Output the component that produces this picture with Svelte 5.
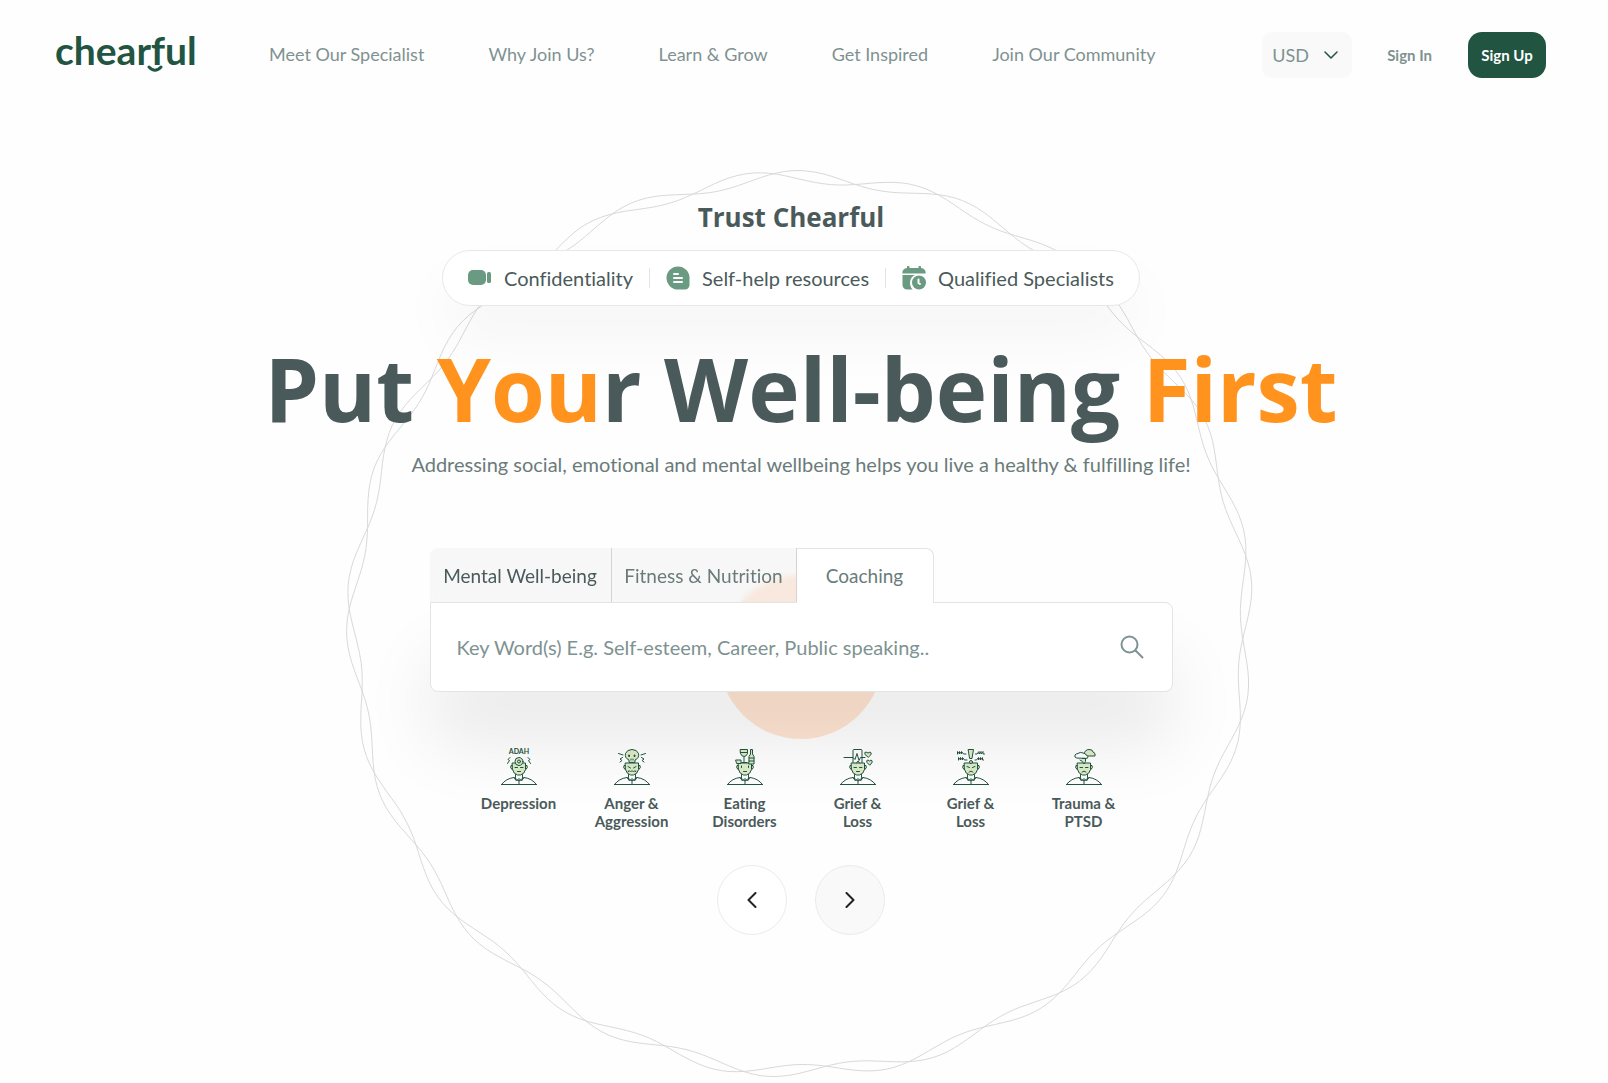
<!--
  Landing page - top navigation, hero with category search and topic carousel
-->

<script lang="ts">
  const navLinks = [
    'Meet Our Specialist',
    'Why Join Us?',
    'Learn & Grow',
    'Get Inspired',
    'Join Our Community'
  ];

  const perks = [
    { icon: 'video', label: 'Confidentiality' },
    { icon: 'article', label: 'Self-help resources' },
    { icon: 'calendar', label: 'Qualified Specialists' }
  ];

  const tabs = ['Mental Well-being', 'Fitness & Nutrition', 'Coaching'];

  const topics = [
    { icon: 'adah', label: 'Depression' },
    { icon: 'skull', label: 'Anger & Aggression' },
    { icon: 'drinks', label: 'Eating Disorders' },
    { icon: 'pulse', label: 'Grief & Loss' },
    { icon: 'alert', label: 'Grief & Loss' },
    { icon: 'cloud', label: 'Trauma & PTSD' }
  ];

  let activeTab = $state('Coaching');
  let currency = $state('USD');
  let query = $state('');

  // Closed wave running round a circle: 17 periods, shifted by the phase in degrees
  function wavePath(phase: number): string {
    const points: string[] = [];
    for (let deg = 0; deg < 360; deg += 1) {
      const wave = ((17 * (deg - 12.5) + phase) * Math.PI) / 180;
      const r = 447 + 6.5 * Math.cos(wave);
      const angle = (deg * Math.PI) / 180;
      points.push(`${(455 + r * Math.cos(angle)).toFixed(1)} ${(455 + r * Math.sin(angle)).toFixed(1)}`);
    }
    return `M${points.join('L')}Z`;
  }

  const waves = [wavePath(-52), wavePath(52)];
</script>

<header class="topbar">
  <a class="logo" href="#home" aria-label="chearful home">
    <span>chearful</span>
    <svg class="smile" viewBox="0 0 16 8" aria-hidden="true">
      <path d="M2 2Q8 8.5 14 2" />
    </svg>
  </a>

  <nav class="nav">
    {#each navLinks as link (link)}
      <a href="#{link}">{link}</a>
    {/each}
  </nav>

  <div class="account">
    <div class="currency">
      <select bind:value={currency} aria-label="Currency">
        <option>USD</option>
        <option>EUR</option>
        <option>GBP</option>
      </select>
      <svg viewBox="0 0 14 8" aria-hidden="true"><path d="M1 1l6 6 6-6" /></svg>
    </div>
    <a class="sign-in" href="#sign-in">Sign In</a>
    <button class="sign-up">Sign Up</button>
  </div>
</header>

<main class="hero">
  <svg class="waves" viewBox="0 0 910 910" aria-hidden="true">
    {#each waves as d (d)}
      <path {d} />
    {/each}
  </svg>

  <section class="trust">
    <h2>Trust Chearful</h2>
    <ul class="perks">
      {#each perks as perk (perk.icon)}
        <li>
          <svg viewBox="0 0 24 24" aria-hidden="true">
            {#if perk.icon === 'video'}
              <rect x="0" y="4" width="18" height="15" rx="5" />
              <rect x="19" y="6" width="4" height="11" rx="1.5" />
            {:else if perk.icon === 'article'}
              <path d="M12 0.5a11.5 11.5 0 0 1 11.5 11.5v7a4.5 4.5 0 0 1-4.5 4.5h-7a11.5 11.5 0 0 1 0-23z" />
              <path class="lines" d="M8 8h4M8 12h8M8 16h8" />
            {:else}
              <path d="M5 2V1a1 1 0 0 1 2.5 0v1h9V1a1 1 0 0 1 2.5 0v1a4.5 4.5 0 0 1 4.5 5.5H.5A4.5 4.5 0 0 1 5 2z" />
              <path d="M.5 9H13c-5 2-7 9-2.5 14.5H5A4.5 4.5 0 0 1 .5 19z" />
              <circle cx="17" cy="16.5" r="7" />
              <path class="lines" d="M16.5 13.5v3.5l1.5 1" />
            {/if}
          </svg>
          <span>{perk.label}</span>
        </li>
      {/each}
    </ul>
  </section>

  <h1>Put <em>You</em>r Well-being <em>First</em></h1>
  <p class="lead">Addressing social, emotional and mental wellbeing helps you live a healthy &amp; fulfilling life!</p>

  <section class="finder">
    <div class="orb"></div>
    <div class="tabs" role="tablist">
      {#each tabs as tab (tab)}
        <button
          role="tab"
          class:active={tab === activeTab}
          aria-selected={tab === activeTab}
          onclick={() => (activeTab = tab)}
        >
          {tab}
        </button>
      {/each}
    </div>
    <form class="search" onsubmit={(e) => e.preventDefault()}>
      <input
        type="text"
        bind:value={query}
        aria-label="Key words"
        placeholder="Key Word(s) E.g. Self-esteem, Career, Public speaking.."
      />
      <button aria-label="Search">
        <svg viewBox="0 0 24 24" aria-hidden="true">
          <circle cx="9.5" cy="9.5" r="8" />
          <path d="M15.5 15.5l7 7" />
        </svg>
      </button>
    </form>
  </section>

  <ul class="topics">
    {#each topics as topic (topic.icon)}
      <li>
        <a href="#{topic.icon}">
          <svg viewBox="0 0 36 36" aria-hidden="true">
            <!-- shoulders, collar, head -->
            <path d="M.5 35.5h35M.5 35.5Q5 29.5 13 28.5L18 32l5-3.5q8 1 12.5 7M14.5 25v3.5M21.5 25v3.5M13 28.5l2.5 3.5 2.5-2.5 2.5 2.5 2.5-3.5M18 31v4" />
            <path class="skin" d="M11.5 16.5H10q-1.5 2 1.5 4.5M24.5 16.5H26q1.5 2-1.5 4.5" />
            <path class="skin" d="M11.5 14h13v6.5q-1 4.5-5 5.5h-3q-4-1-5-5.5z" />
            {#if topic.icon === 'adah'}
              <text x="18" y="5">ADAH</text>
              <path d="M9 8.5l-2 2 1.5 1-2 3M27 8.5l2 2-1.5 1 2 3" />
              <circle class="skin" cx="18" cy="12.5" r="4" />
              <circle cx="18" cy="12.5" r="1.5" />
              <path d="M14 18.5h2.5M19.5 18.5H22M16.5 22.5h3" />
            {:else if topic.icon === 'skull'}
              <path class="skin" d="M15 13v-2q-4.5-2-3.5-6.5Q13 .5 18 .5t6.5 4Q25.5 9 21 11v2z" />
              <path class="dark" d="M15 6h.5v1.5H15zM20.5 6h.5v1.5h-.5z" />
              <path d="M17 10v1M19 10v1M9 6L4.5 4.5M8.5 8.5L6 10l2 1.5L6 13M27 6l4.5-1.5M27.5 8.5L30 10l-2 1.5 2 1.5M14 17.5l2.5 1.5M22 17.5L19.5 19M14 23l1-1.5 1.5 1.5 1.5-1.5 1.5 1.5 1.5-1.5 1 1.5" />
            {:else if topic.icon === 'drinks'}
              <path class="skin" d="M13.5.5h7v4q-1 3-3.5 3t-3.5-3z" />
              <path class="skin" d="M9 11h5v3.5h-4zM22 13V7.5L23.5 5V.5h2V5L27 7.5V15h-5z" />
              <path d="M13.5 3.5h7M17 8v5M15 13.5h5M22 9h5M22 12h5" />
              <path d="M14.5 17v1.5M21.5 17v1.5M16.5 22.5h3" />
            {:else if topic.icon === 'pulse'}
              <path d="M13 13.5v-12q0-1 1-1h7q1 0 1 1v12M4 8.5h9l2 2 2-6 2 7 1.5-3H25" />
              <path class="skin" d="M28 8l-3-2.5q-1-2.5 1-2.5l2 1 2-1q2 .5 1 2.5zM29.5 16l-2.5-2.5q-1-2.5 1-2.5l1.5 1 1.5-1q2 .5 1 2.5z" />
              <path d="M16.5 14l1.5-2 1.5 2M14 18.5h2.5M19.5 18.5H22M16.5 22.5h3" />
            {:else if topic.icon === 'alert'}
              <path class="skin" d="M15.5.5h5l-1.5 9h-2z" />
              <circle class="skin" cx="18" cy="13" r="1.5" />
              <path d="M4.5 5V2.5l2 2.5V2.500l2 2.500V2.500l2 2.500H13M22.5 5H24l2-2.500V5l2-2.500V5l2-2.500V5h1.500M5.500 11V8.500l2 2.500V8.500l2 2.500V8.500l2 2.500H14M22 11h1.500l2-2.500V11l2-2.500V11l2-2.500V11h1" />
              <path d="M14 17.5l2.5 1M22 17.5l-2.5 1M16 23q2-2 4 0" />
            {:else}
              <path class="skin" d="M18 5q1-4.5 5-4.5t4 2.5q3 1 2 4h-8z" />
              <path class="cloud" d="M10.5 9Q8 8.500 9 6q1-1.500 3-1.500Q14 2.500 17 4q3 .5 3 2 3 .5 1.500 3z" />
              <path class="skin" d="M16.5 9.5h3v3L18 15l-1.5-2.5L14 11" />
              <path d="M14 18.5h2.5M19.5 18.5H22M16 23q2-2 4 0" />
            {/if}
          </svg>
          <span>{topic.label}</span>
        </a>
      </li>
    {/each}
  </ul>

  <div class="pager">
    <button aria-label="Previous"><svg viewBox="0 0 10 16" aria-hidden="true"><path d="M8.5 1l-7 7 7 7" /></svg></button>
    <button class="next" aria-label="Next"><svg viewBox="0 0 10 16" aria-hidden="true"><path d="M1.5 1l7 7-7 7" /></svg></button>
  </div>
</main>

<style>
  :global(body) {
    background: #fefefe;
    color: #4a5a5a;
    font-family: Lato, 'Open Sans', sans-serif;
    font-size: 20px;
    font-variant-ligatures: none;
  }

  a {
    color: inherit;
    text-decoration: none;
  }

  button,
  select,
  input {
    font: inherit;
    color: inherit;
    border: none;
    background: none;
    margin: 0;
    padding: 0;
  }

  button {
    cursor: pointer;
  }

  ul {
    list-style: none;
    margin: 0;
    padding: 0;
  }

  svg {
    fill: none;
    stroke-linecap: round;
    stroke-linejoin: round;
  }

  .topbar {
    display: flex;
    align-items: center;
    height: 46px;
    padding: 32px 62px 32px 55px;
    color: #7e9291;
  }

  .logo {
    position: relative;
    align-self: flex-start;
    width: 142px;
    margin-right: 72px;
    color: #215441;
    font-size: 39px;
    font-weight: 700;
    line-height: 36px;
  }

  .smile {
    position: absolute;
    right: 34px;
    bottom: -5px;
    width: 16px;
    height: 8px;
    stroke: #215441;
    stroke-width: 3;
  }

  .nav {
    display: flex;
    gap: 64px;
    font-size: 18px;
    line-height: 24px;
    padding-bottom: 2px;
    white-space: nowrap;
  }

  .account {
    display: flex;
    align-items: center;
    margin-left: auto;
    font-size: 15px;
    font-weight: 700;
  }

  .currency {
    position: relative;
    font-size: 18px;
    font-weight: 400;
  }

  .currency select {
    appearance: none;
    width: 90px;
    height: 46px;
    padding-left: 10px;
    border-radius: 10px;
    background: #f9f9f9;
  }

  .currency svg {
    position: absolute;
    top: 19px;
    right: 14px;
    width: 14px;
    height: 8px;
    stroke: #215441;
    stroke-width: 1.5;
    pointer-events: none;
  }

  .sign-in {
    margin: 0 36px 0 35px;
  }

  .sign-up {
    width: 78px;
    height: 46px;
    border-radius: 14px;
    background: #215441;
    color: #fff;
  }

  .hero {
    position: relative;
    display: flex;
    flex-direction: column;
    align-items: center;
    padding: 90px 6px 148px 0;
    isolation: isolate;
  }

  .waves {
    position: absolute;
    top: 59px;
    left: 50%;
    width: 910px;
    height: 910px;
    margin-left: -459px;
    stroke: #d9d9d9;
    stroke-width: 1;
    z-index: -2;
  }

  .trust {
    display: flex;
    flex-direction: column;
    align-items: center;
    padding-right: 20px;
  }

  h1,
  h2 {
    font-family: 'Open Sans', sans-serif;
    font-weight: 700;
  }

  h2 {
    margin: 0 0 16px;
    font-size: 26px;
    line-height: 34px;
  }

  .perks {
    display: flex;
    align-items: center;
    height: 54px;
    padding: 0 9px;
    border: 1px solid #e8e8e8;
    border-radius: 28px;
    background: #fff;
    box-shadow: 0 32px 60px rgba(0, 0, 0, 0.04);
  }

  .perks li {
    display: flex;
    align-items: center;
    gap: 12px;
    height: 20px;
    padding: 0 16px;
  }

  .perks li + li {
    border-left: 1px solid #e4e4e4;
  }

  .perks svg {
    width: 24px;
    height: 24px;
    fill: #6b9a83;
  }

  .perks .lines {
    fill: none;
    stroke: #fff;
    stroke-width: 2;
  }

  h1 {
    margin: 28px 0 0;
    font-size: 87px;
    line-height: 108px;
    text-align: center;
  }

  h1 em {
    color: #ff931e;
    font-style: normal;
  }

  .lead {
    margin: 10px 0 0;
    color: #6a7b7a;
    line-height: 24px;
    text-align: center;
  }

  .finder {
    position: relative;
    width: 743px;
    max-width: 100%;
    margin-top: 72px;
  }

  .orb {
    position: absolute;
    top: 27px;
    left: 50%;
    width: 164px;
    height: 164px;
    margin-left: -82px;
    border-radius: 50%;
    background: #ffe5d2;
    z-index: -1;
  }

  .tabs {
    display: flex;
  }

  .tabs button {
    height: 54px;
    width: 185px;
    border: 1px solid #d4d4d4;
    border-width: 0 1px 0 0;
    background: rgba(238, 238, 238, 0.4);
    backdrop-filter: blur(3px);
    color: #6a7b7a;
    font-size: 19px;
    white-space: nowrap;
  }

  .tabs button:first-child {
    width: 182px;
    border-top-left-radius: 8px;
    color: #4a5a5a;
  }

  .tabs button:last-child {
    width: 137px;
    border-color: #e4e4e4;
    border-width: 1px 1px 0 0;
    border-top-right-radius: 8px;
  }

  .tabs .active {
    position: relative;
    height: 55px;
    margin-bottom: -1px;
    padding-bottom: 2px;
    background: #fff;
    z-index: 1;
  }

  .search {
    display: flex;
    align-items: center;
    height: 88px;
    padding: 0 28px 0 26px;
    border: 1px solid #e4e4e4;
    border-radius: 0 8px 8px 8px;
    background: #fff;
    box-shadow: 0 54px 70px rgba(0, 0, 0, 0.08);
  }

  .search input {
    flex: 1;
    height: 48px;
    outline: none;
  }

  .search input::placeholder {
    color: #7e9291;
    opacity: 1;
  }

  .search svg {
    display: block;
    width: 24px;
    height: 24px;
    stroke: #7e9291;
    stroke-width: 2;
  }

  .topics {
    display: flex;
    margin-top: 57px;
    color: #4a5a5a;
    font-size: 15px;
    font-weight: 700;
    line-height: 18px;
    text-align: center;
  }

  .topics li {
    width: 113px;
  }

  .topics a {
    display: flex;
    flex-direction: column;
    align-items: center;
    gap: 9px;
  }

  .topics span {
    width: 78px;
  }

  .topics svg {
    overflow: visible;
    width: 36px;
    height: 36px;
    stroke: #215441;
    stroke-width: 1;
  }

  .topics .skin {
    fill: #dcebc8;
  }

  .topics .cloud {
    fill: #fff;
  }

  .topics .dark {
    fill: #215441;
  }

  .topics text {
    fill: #215441;
    stroke: none;
    font-size: 7px;
    font-weight: 700;
    text-anchor: middle;
  }

  .pager {
    display: flex;
    gap: 28px;
    margin-top: 35px;
  }

  .pager button {
    display: grid;
    place-items: center;
    width: 70px;
    height: 70px;
    border: 1px solid #ebebeb;
    border-radius: 50%;
    background: #fff;
  }

  .pager .next {
    background: #f9f9f9;
  }

  .pager svg {
    width: 10px;
    height: 16px;
    stroke: #222;
    stroke-width: 2;
  }
</style>
